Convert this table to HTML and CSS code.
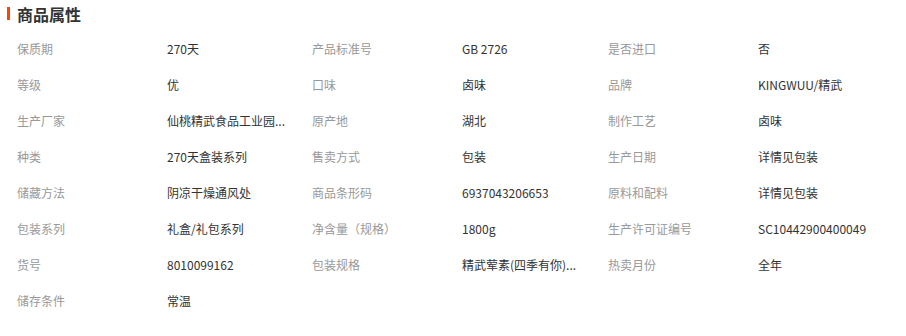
FILE: index.html
```html
<!DOCTYPE html>
<html lang="zh-CN">
<head>
<meta charset="utf-8">
<title>商品属性</title>
<link rel="stylesheet" href="styles.css">
</head>
<body>
<div class="attrs">
  <h2 class="attrs-title"><span class="bar"></span>商品属性</h2>
  <div class="grid">
    <div class="k">保质期</div><div class="v">270天</div>
    <div class="k">产品标准号</div><div class="v">GB 2726</div>
    <div class="k">是否进口</div><div class="v">否</div>

    <div class="k">等级</div><div class="v">优</div>
    <div class="k">口味</div><div class="v">卤味</div>
    <div class="k">品牌</div><div class="v">KINGWUU/精武</div>

    <div class="k">生产厂家</div><div class="v">仙桃精武食品工业园...</div>
    <div class="k">原产地</div><div class="v">湖北</div>
    <div class="k">制作工艺</div><div class="v">卤味</div>

    <div class="k">种类</div><div class="v">270天盒装系列</div>
    <div class="k">售卖方式</div><div class="v">包装</div>
    <div class="k">生产日期</div><div class="v">详情见包装</div>

    <div class="k">储藏方法</div><div class="v">阴凉干燥通风处</div>
    <div class="k">商品条形码</div><div class="v">6937043206653</div>
    <div class="k">原料和配料</div><div class="v">详情见包装</div>

    <div class="k">包装系列</div><div class="v">礼盒/礼包系列</div>
    <div class="k">净含量（规格）</div><div class="v">1800g</div>
    <div class="k">生产许可证编号</div><div class="v">SC10442900400049</div>

    <div class="k">货号</div><div class="v">8010099162</div>
    <div class="k">包装规格</div><div class="v">精武荤素(四季有你)...</div>
    <div class="k">热卖月份</div><div class="v">全年</div>

    <div class="k">储存条件</div><div class="v">常温</div>
  </div>
</div>
</body>
</html>
```

FILE: styles.css
```css
html, body {
  margin: 0;
  padding: 0;
  background: #fff;
}
body {
  font-family: "Noto Sans CJK SC", "Microsoft YaHei", sans-serif;
  font-size: 12px;
  color: #333;
}
.attrs {
  width: 906px;
}
.attrs-title {
  margin: 0;
  height: 31px;
  line-height: 28px;
  font-size: 16px;
  font-weight: bold;
  color: #333;
  display: flex;
  align-items: flex-start;
}
.bar {
  display: block;
  width: 3px;
  height: 13px;
  background: #ff4400;
  margin: 7px 7px 0 7px;
}
.grid {
  display: grid;
  grid-template-columns: 150px 145px 150px 146px 150px 1fr;
  grid-auto-rows: 36px;
  padding-left: 17px;
}
.k, .v {
  line-height: 36px;
  white-space: nowrap;
}
.k {
  color: #999;
}
.v {
  color: #333;
}
```
